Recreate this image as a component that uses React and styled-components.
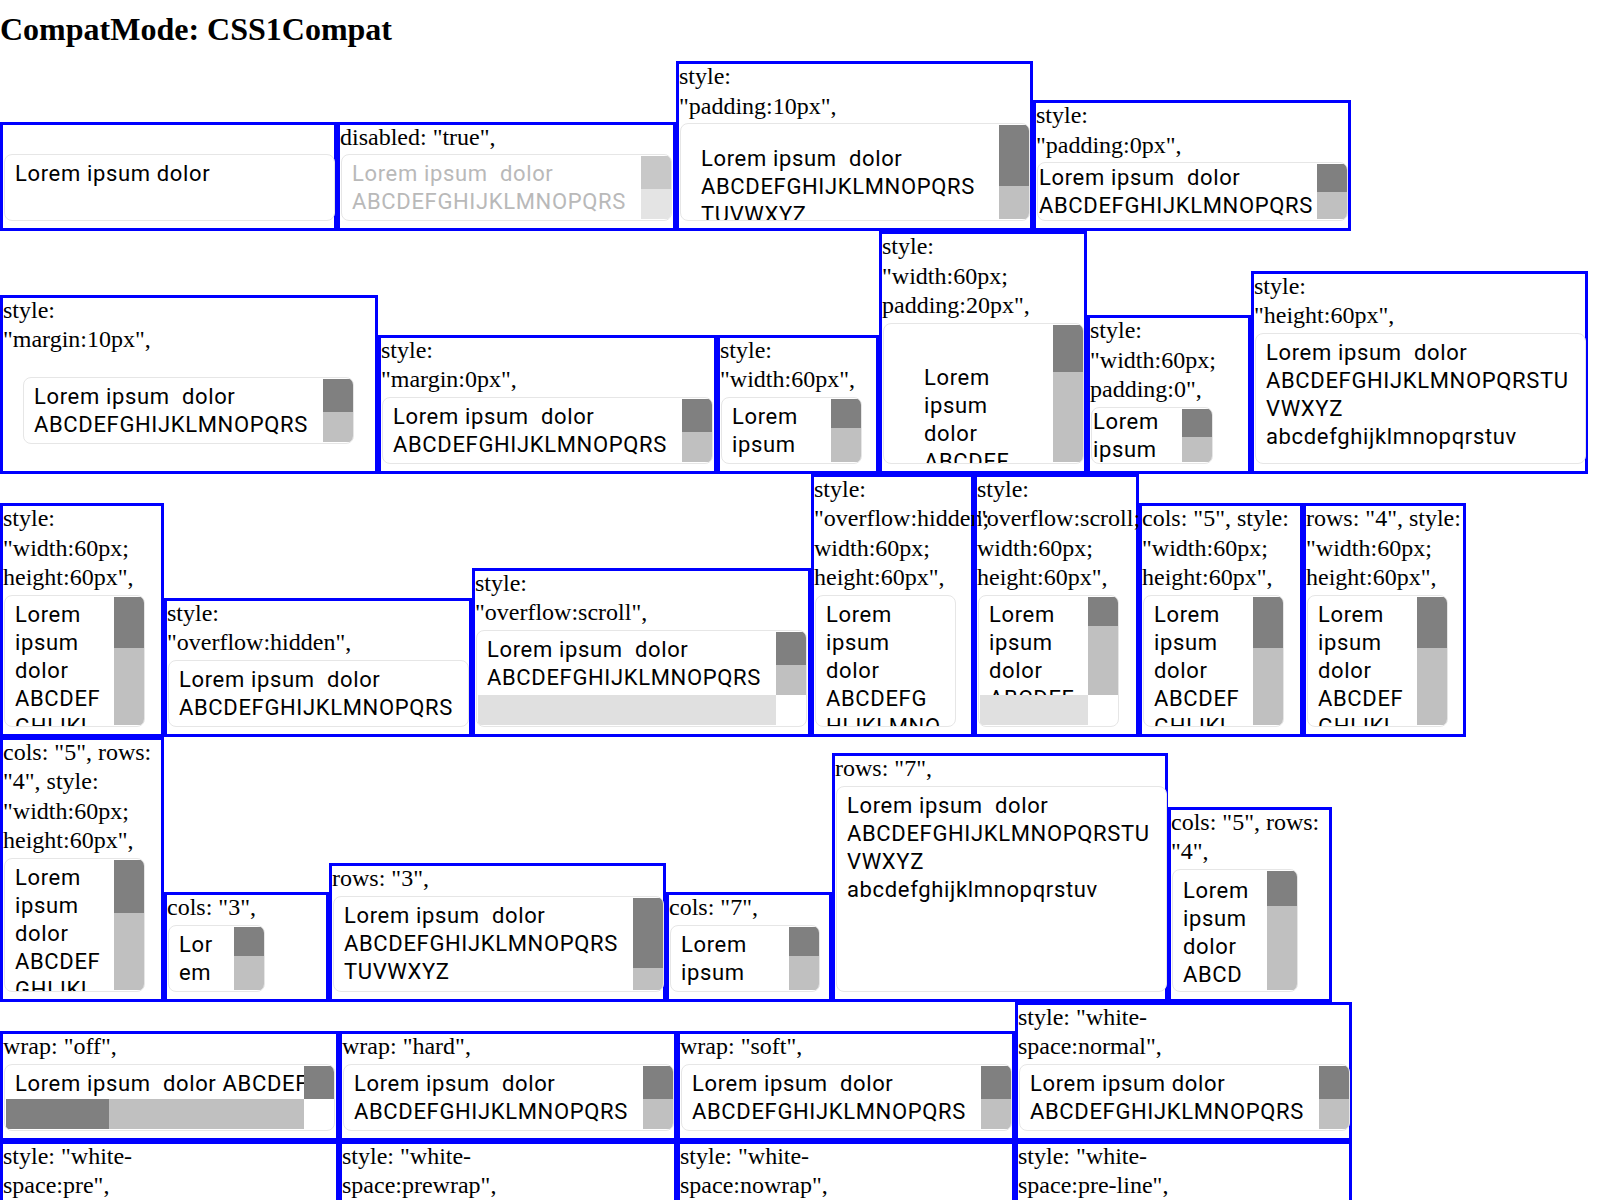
import styled, { createGlobalStyle } from "styled-components";

const GlobalStyle = createGlobalStyle`
  html, body {
    margin: 0;
    padding: 0;
    overflow: hidden;
    background: #ffffff;
  }
  body {
    font-family: "Liberation Serif", "Times New Roman", serif;
    color: #000000;
  }
`;

const Page = styled.div`
  width: 1600px;
`;

const Heading = styled.h1`
  font: bold 32px/37px "Liberation Serif", serif;
  margin: 11px 0 13px;
`;

const Row = styled.div`
  display: flex;
  align-items: flex-end;
`;

const Box = styled.div`
  box-sizing: border-box;
  flex-shrink: 0;
  width: ${(p) => p.$w}px;
  border: 3px solid #0000ff;
`;

const LabelBlock = styled.div`
  margin-top: -2px;
  padding-bottom: 2px;
`;

const Label = styled.div`
  font-size: 24px;
  line-height: 29.5px;
  white-space: pre;
`;

const Field = styled.div`
  position: relative;
  box-sizing: border-box;
  overflow: hidden;
  width: ${(p) => p.$w}px;
  height: ${(p) => p.$h}px;
  padding: ${(p) => p.$pad || "5px 10px"};
  margin: ${(p) => p.$m || "0 1px 7px"};
  border: 1px solid #e6e6e6;
  border-radius: 8px;
  background: #ffffff;
  color: ${(p) => (p.$dis ? "#b9b9b9" : "#000000")};
`;

const Line = styled.div`
  font-family: Roboto, "Liberation Sans", sans-serif;
  font-size: 22px;
  letter-spacing: 0.65px;
  line-height: 28px;
  white-space: pre;
`;

const VBar = styled.div`
  position: absolute;
  top: 1px;
  right: 0;
  bottom: ${(p) => (p.$h ? 31 : 1)}px;
  width: 30px;
  background: ${(p) => (p.$dis ? "#e4e4e4" : "#c0c0c0")};
`;

const Thumb = styled.div`
  background: ${(p) => (p.$dis ? "#c8c8c8" : "#808080")};
  height: 100%;
`;

const HBar = styled.div`
  position: absolute;
  left: 1px;
  right: 30px;
  bottom: 1px;
  height: 30px;
  display: flex;
  background: ${(p) => (p.$on ? "#c0c0c0" : "#e0e0e0")};
`;

const HThumb = styled.div`
  background: #808080;
  height: 100%;
`;

const L2 = ["Lorem ipsum  dolor", "ABCDEFGHIJKLMNOPQRS"];
const L3 = [...L2, "TUVWXYZ"];
const L4 = [
  "Lorem ipsum  dolor",
  "ABCDEFGHIJKLMNOPQRSTU",
  "VWXYZ",
  "abcdefghijklmnopqrstuv",
];
const NARROW = ["Lorem", "ipsum", "dolor", "ABCDEF", "GHIJKL"];

const std = (extra = {}) => ({ w: 331, h: 67, lines: L2, thumb: 53, ...extra });
const narrow = (extra = {}) => ({ w: 141, h: 132, lines: NARROW, thumb: 40, ...extra });

const rows = [
  [
    { w: 337, label: [" "], ta: std({ lines: ["Lorem ipsum dolor"], thumb: null }) },
    { w: 339, label: ['disabled: "true",'], ta: std({ dis: true }) },
    { w: 357, label: ["style:", '"padding:10px",'], ta: std({ w: 350, h: 98, pad: "21px 20px 20px", lines: L3, thumb: 65 }) },
    { w: 318, label: ["style:", '"padding:0px",'], ta: std({ w: 311, h: 59, pad: "1px", thumb: 51 }) },
  ],
  [
    { w: 378, label: ["style:", '"margin:10px",'], ta: std({ m: "20px 21px 27px 20px" }) },
    { w: 339, label: ["style:", '"margin:0px",'], ta: std() },
    { w: 162, label: ["style:", '"width:60px",'], ta: std({ w: 141, lines: ["Lorem", "ipsum"], thumb: 47 }) },
    { w: 208, label: ["style:", '"width:60px;', 'padding:20px",'], ta: { w: 201, h: 141, pad: "40px", lines: ["Lorem", "ipsum", "dolor", "ABCDEF"], thumb: 35 } },
    { w: 164, label: ["style:", '"width:60px;', 'padding:0",'], ta: { w: 122, h: 57, pad: "0 1px", lines: ["Lorem", "ipsum"], thumb: 53 } },
    { w: 337, label: ["style:", '"height:60px",'], ta: std({ h: 131, lines: L4, thumb: null }) },
  ],
  [
    { w: 164, label: ["style:", '"width:60px;', 'height:60px",'], ta: narrow() },
    { w: 308, label: ["style:", '"overflow:hidden",'], ta: std({ w: 301, thumb: null }) },
    { w: 339, label: ["style:", '"overflow:scroll",'], ta: std({ h: 97, hbar: "off" }) },
    { w: 163, label: ["style:", '"overflow:hidden;', "width:60px;", 'height:60px",'], ta: narrow({ lines: ["Lorem", "ipsum", "dolor", "ABCDEFG", "HIJKLMNO"], thumb: null }) },
    { w: 165, label: ["style:", '"overflow:scroll;', "width:60px;", 'height:60px",'], ta: narrow({ lines: ["Lorem", "ipsum", "dolor", "ABCDEF"], thumb: 30, hbar: "off" }) },
    { w: 164, label: ['cols: "5", style:', '"width:60px;', 'height:60px",'], ta: narrow() },
    { w: 163, label: ['rows: "4", style:', '"width:60px;', 'height:60px",'], ta: narrow() },
  ],
  [
    { w: 164, label: ['cols: "5", rows:', '"4", style:', '"width:60px;', 'height:60px",'], ta: narrow({ h: 134, thumb: 41 }) },
    { w: 165, label: ['cols: "3",'], ta: std({ w: 97, lines: ["Lor", "em"], thumb: 47 }) },
    { w: 337, label: ['rows: "3",'], ta: std({ h: 96, lines: L3, thumb: 77 }) },
    { w: 166, label: ['cols: "7",'], ta: std({ w: 150, lines: ["Lorem", "ipsum"], thumb: 47 }) },
    { w: 336, label: ['rows: "7",'], ta: std({ h: 206, lines: L4, thumb: null }) },
    { w: 164, label: ['cols: "5", rows:', '"4",'], ta: std({ w: 126, h: 123, pad: "7px 10px 5px", lines: ["Lorem", "ipsum", "dolor", "ABCD"], thumb: 30 }) },
  ],
  [
    { w: 339, label: ['wrap: "off",'], ta: std({ lines: ["Lorem ipsum  dolor ABCDEFGHIJKLMNOPQRSTUVWXYZ"], thumb: 100, hbar: "on", hthumb: 34.5 }) },
    { w: 338, label: ['wrap: "hard",'], ta: std() },
    { w: 338, label: ['wrap: "soft",'], ta: std() },
    { w: 337, label: ['style: "white-', 'space:normal",'], ta: std({ lines: ["Lorem ipsum dolor", "ABCDEFGHIJKLMNOPQRS"] }) },
  ],
  [
    { w: 339, label: ['style: "white-', 'space:pre",'], ta: std() },
    { w: 338, label: ['style: "white-', 'space:prewrap",'], ta: std() },
    { w: 338, label: ['style: "white-', 'space:nowrap",'], ta: std() },
    { w: 337, label: ['style: "white-', 'space:pre-line",'], ta: std() },
  ],
];

const TextArea = ({ ta }) => (
  <Field $w={ta.w} $h={ta.h} $pad={ta.pad} $m={ta.m} $dis={ta.dis}>
    {ta.lines.map((l, i) => (
      <Line key={i}>{l}</Line>
    ))}
    {ta.thumb != null && (
      <VBar $dis={ta.dis} $h={!!ta.hbar}>
        <Thumb $dis={ta.dis} style={{ height: `${ta.thumb}%` }} />
      </VBar>
    )}
    {ta.hbar && (
      <HBar $on={ta.hbar === "on"}>
        {ta.hthumb && <HThumb style={{ width: `${ta.hthumb}%` }} />}
      </HBar>
    )}
  </Field>
);

export default function App() {
  return (
    <Page>
      <GlobalStyle />
      <Heading>CompatMode: CSS1Compat</Heading>
      {rows.map((row, r) => (
        <Row key={r}>
          {row.map((b, i) => (
            <Box key={i} $w={b.w}>
              <LabelBlock>
                {b.label.map((t, j) => (
                  <Label key={j}>{t}</Label>
                ))}
              </LabelBlock>
              <TextArea ta={b.ta} />
            </Box>
          ))}
        </Row>
      ))}
    </Page>
  );
}
